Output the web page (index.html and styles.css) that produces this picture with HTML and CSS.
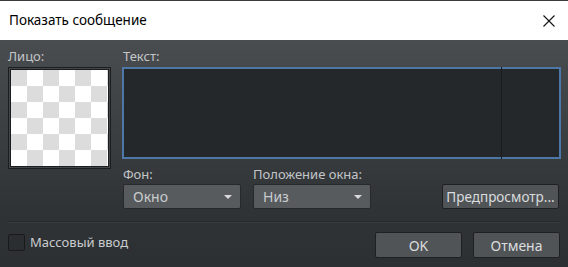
FILE: index.html
```html
<!DOCTYPE html>
<html lang="ru">
<head>
<meta charset="utf-8">
<title>Показать сообщение</title>
<link rel="stylesheet" href="styles.css">
</head>
<body>
<div class="window">
  <div class="titlebar">
    <span class="title">Показать сообщение</span>
    <svg class="close" width="12" height="12" viewBox="0 0 12 12"><path d="M0.5 0.5L11.5 11.5M11.5 0.5L0.5 11.5" stroke="#111" stroke-width="1.1" fill="none"/></svg>
  </div>
  <div class="content">
    <div class="top">
      <div class="face-col">
        <div class="label">Лицо:</div>
        <div class="face-frame"><div class="face"></div></div>
      </div>
      <div class="text-col">
        <div class="label">Текст:</div>
        <div class="textarea"><div class="guide"></div></div>
        <div class="options">
          <div class="field">
            <div class="label">Фон:</div>
            <div class="select"><span>Окно</span><i class="arrow"></i></div>
          </div>
          <div class="field">
            <div class="label">Положение окна:</div>
            <div class="select"><span>Низ</span><i class="arrow"></i></div>
          </div>
          <div class="button preview">Предпросмотр...</div>
        </div>
      </div>
    </div>
    <div class="separator"></div>
    <div class="bottom">
      <label class="check"><span class="box"></span><span>Массовый ввод</span></label>
      <div class="actions">
        <div class="button action">OK</div>
        <div class="button action">Отмена</div>
      </div>
    </div>
  </div>
</div>
</body>
</html>
```
FILE: styles.css
```css
* { box-sizing: border-box; }
html, body { margin: 0; padding: 0; }
body {
  width: 568px;
  height: 267px;
  overflow: hidden;
  font-family: "Noto Sans", "DejaVu Sans", sans-serif;
}
.window {
  width: 568px;
  height: 267px;
  display: flex;
  flex-direction: column;
}
.titlebar {
  height: 40px;
  background: #fff;
  border-top: 1px solid #3a3c3e;
  display: flex;
  align-items: center;
  justify-content: space-between;
  padding: 0 13px 0 9px;
}
.title {
  font-family: "Noto Sans", sans-serif;
  font-size: 13.5px;
  color: #000;
  margin-top: -1px;
}
.close { display: block; }
.content {
  flex: 1;
  background: linear-gradient(#4a4d50, #303336 75%, #2d3033);
  padding: 8px 8px 0 8px;
  display: flex;
  flex-direction: column;
}
.label {
  font-size: 13px;
  color: #c3c6c9;
  line-height: 16px;
  height: 16px;
}
.top {
  display: flex;
  gap: 11px;
}
.face-col { width: 103px; }
.face-col .label { margin-bottom: 3px; }
.face-frame {
  width: 103px;
  height: 102px;
  border: 1px solid #1c1d1f;
  background: #44474a;
  padding: 1px;
}
.face {
  width: 100%;
  height: 100%;
  border: 1px solid #1c1d1f;
  background: repeating-conic-gradient(#fff 0 25%, #dcdcdc 0 50%) 0 0 / 32px 32px;
}
.text-col {
  flex: 1;
  display: flex;
  flex-direction: column;
}
.text-col > .label { margin-bottom: 3px; padding-left: 1px; }
.textarea {
  height: 92px;
  width: 439px;
  border: 2px solid #4d77a7;
  background: #25282b;
  position: relative;
}
.guide {
  position: absolute;
  left: 377px;
  top: -2px;
  bottom: -2px;
  width: 1px;
  background: #1a1c1e;
}
.options {
  display: flex;
  align-items: flex-end;
  margin-top: 7px;
  padding-left: 1px;
}
.field { display: flex; flex-direction: column; margin-right: 12px; }
.field .label { margin-bottom: 2px; }
.select {
  width: 118px;
  height: 25px;
  background: #575b5e;
  border: 1px solid #26282a;
  border-radius: 2px;
  display: flex;
  align-items: center;
  justify-content: space-between;
  padding: 0 8px 0 9px;
  font-size: 14px;
  color: #c9ccce;
}
.arrow {
  width: 0; height: 0;
  border-left: 4px solid transparent;
  border-right: 4px solid transparent;
  border-top: 4px solid #d8dadc;
}
.button {
  background: #505457;
  border: 1px solid #1e2022;
  border-radius: 2px;
  color: #dadcde;
  font-size: 13.5px;
  display: flex;
  align-items: center;
  justify-content: center;
}
.preview {
  margin-left: auto;
  width: 117px;
  height: 25px;
  margin-right: 2px;
}
.separator {
  background: #26292b;
  border-bottom: 1px solid #3a3d40;
  height: 2px;
  margin-top: 12px;
}
.bottom {
  display: flex;
  justify-content: space-between;
  align-items: flex-start;
  margin-top: 9px;
}
.check {
  display: flex;
  align-items: center;
  gap: 5px;
  font-size: 13px;
  color: #c9ccce;
  margin-top: 1px;
}
.box {
  width: 17px;
  height: 17px;
  background: #2b2e31;
  border: 1px solid #191a1c;
  border-radius: 2px;
}
.actions { display: flex; gap: 11px; }
.action { width: 87px; height: 26px; font-size: 14px; }
```
